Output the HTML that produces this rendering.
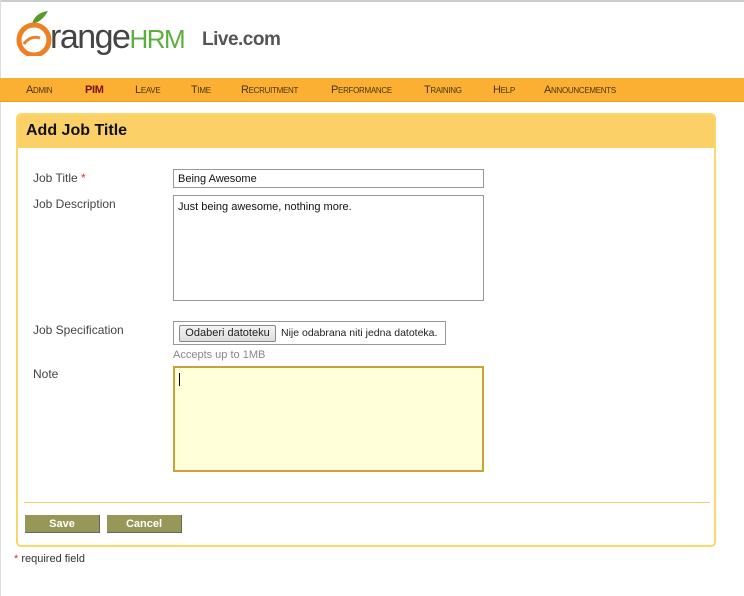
<!DOCTYPE html>
<html><head><style>
*{margin:0;padding:0;box-sizing:border-box}
body{width:744px;height:596px;background:#fff;font-family:"Liberation Sans",Arial,sans-serif;position:relative;overflow:hidden}
.a{position:absolute}
.nav{left:0;top:78px;width:744px;height:24px;background:#FBB034;border-bottom:1px solid #e8a020}
.nav span{position:absolute;top:7px;color:#4a3510;font-variant:small-caps;font-size:11px;line-height:11px;letter-spacing:-0.3px}
.panel{left:16px;top:113px;width:700px;height:434px;border:2px solid #F9D769;border-radius:5px;background:#fff}
.hd{left:0;top:0;width:696px;height:33px;background:#FBD066;border-radius:3px 3px 0 0}
.lbl{font-size:12px;color:#444}
.inp{border:1px solid #999;background:#fff;font-size:11px;color:#111}
.btn{background:#979858;color:#fff;font-weight:bold;font-size:11px;text-align:center;line-height:18px;height:18px;width:75px;border-right:1px solid #666;border-bottom:1px solid #666}
</style></head><body>
<div class="a" style="left:0;top:0;width:744px;height:2px;background:#ccc"></div>
<div class="a" style="left:0;top:0;width:1px;height:596px;background:#ddd"></div>
<svg class="a" style="left:14px;top:8px" width="40" height="48" viewBox="0 0 40 48">
<path d="M18 16 C20 8 26 4 34 3 C30 10 26 14 18 16Z" fill="#5a9a2a"/>
<circle cx="20" cy="32" r="15" fill="none" stroke="#EE7F22" stroke-width="5"/>
<path d="M10 36 C14 30 20 28 26 30" stroke="#EE7F22" stroke-width="3" fill="none"/>
</svg>
<div class="a" style="left:50px;top:18px;font-size:34px;color:#444;letter-spacing:-1.5px">range<span style="color:#5BAF3C;font-size:26px;letter-spacing:-1.5px">HRM</span></div>
<div class="a" style="left:202px;top:29px;font-size:19px;color:#555;font-weight:bold;letter-spacing:-0.5px">Live.com</div>
<div class="a nav">
<span style="left:26px">Admin</span><span style="left:85px;font-weight:bold;color:#7a1010;font-size:11px">PIM</span><span style="left:135px">Leave</span><span style="left:191px">Time</span><span style="left:241px">Recruitment</span><span style="left:331px">Performance</span><span style="left:424px">Training</span><span style="left:493px">Help</span><span style="left:544px">Announcements</span>
</div>
<div class="a panel">
<div class="a hd"><div class="a" style="left:8px;top:7px;font-size:16px;font-weight:bold;color:#111">Add Job Title</div></div>
<div class="a lbl" style="left:15px;top:56px">Job Title <span style="color:#d33">*</span></div>
<div class="a inp" style="left:155px;top:54px;width:311px;height:19px;padding:3px 4px">Being Awesome</div>
<div class="a lbl" style="left:15px;top:82px">Job Description</div>
<div class="a inp" style="left:155px;top:80px;width:311px;height:106px;padding:5px 4px">Just being awesome, nothing more.</div>
<div class="a lbl" style="left:15px;top:208px">Job Specification</div>
<div class="a" style="left:155px;top:206px;width:273px;height:24px;border:1px solid #999;font-size:11px;color:#222;white-space:nowrap">
<div class="a" style="left:5px;top:3px;width:97px;height:17px;border:1px solid #888;border-radius:2px;background:linear-gradient(#f4f4f4,#ddd);text-align:center;line-height:15px">Odaberi datoteku</div>
<div class="a" style="left:107px;top:5px;font-size:10.5px">Nije odabrana niti jedna datoteka.</div></div>
<div class="a" style="left:155px;top:234px;font-size:11px;color:#888">Accepts up to 1MB</div>
<div class="a lbl" style="left:15px;top:252px">Note</div>
<div class="a" style="left:155px;top:251px;width:311px;height:106px;border:2px solid #C9A33A;background:#FFFFD9"><div class="a" style="left:4px;top:5px;width:1px;height:13px;background:#000"></div></div>
<div class="a" style="left:6px;top:387px;width:686px;height:1px;background:#F2D35E"></div>
<div class="a btn" style="left:7px;top:400px">Save</div>
<div class="a btn" style="left:89px;top:400px">Cancel</div>
</div>
<div class="a" style="left:14px;top:553px;font-size:11px;color:#333"><span style="color:#d33">*</span> required field</div>
</body></html>
